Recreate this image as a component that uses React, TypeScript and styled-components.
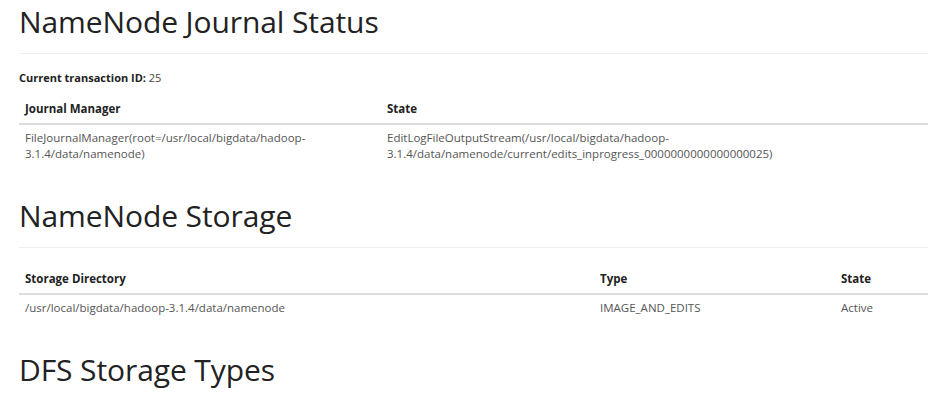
import React from "react";
import styled, { createGlobalStyle } from "styled-components";

const GlobalStyle = createGlobalStyle`
  html, body {
    margin: 0;
    padding: 0;
    background: #fff;
  }
  body {
    font-family: "Open Sans", "Noto Sans", sans-serif;
    font-size: 11px;
    color: #333;
  }
`;

const Page = styled.div`
  width: 909px;
  padding: 4px 15px 0 19px;
`;

const PageHeader = styled.div`
  border-bottom: 1px solid #eee;
  padding-bottom: 13px;
  margin-bottom: 16px;
`;

const Title = styled.h1`
  margin: 0;
  font-size: 30px;
  font-weight: 400;
  line-height: 36px;
  color: #222;
  letter-spacing: -0.1px;
`;

const InfoLine = styled.p`
  margin: 0 0 8px;
  line-height: 16px;
  color: #444;
  b {
    font-weight: 700;
    color: #222;
  }
`;

const Table = styled.table`
  width: 100%;
  border-collapse: collapse;
  margin-bottom: 31px;
  font-size: 11.5px;
`;

const Th = styled.th`
  text-align: left;
  font-weight: 700;
  color: #222;
  padding: 7px 6px 6px;
  line-height: 16px;
  border-bottom: 2px solid #ddd;
`;

const Td = styled.td`
  vertical-align: top;
  padding: 5px 6px;
  line-height: 16px;
  color: #555;
`;

export default function App() {
  return (
    <Page>
      <GlobalStyle />
      <section>
        <PageHeader>
          <Title>NameNode Journal Status</Title>
        </PageHeader>
        <InfoLine>
          <b>Current transaction ID:</b> 25
        </InfoLine>
        <Table>
          <colgroup>
            <col style={{ width: "362px" }} />
            <col />
          </colgroup>
          <thead>
            <tr>
              <Th>Journal Manager</Th>
              <Th>State</Th>
            </tr>
          </thead>
          <tbody>
            <tr>
              <Td>
                FileJournalManager(root=/usr/local/bigdata/hadoop-
                <br />
                3.1.4/data/namenode)
              </Td>
              <Td>
                EditLogFileOutputStream(/usr/local/bigdata/hadoop-
                <br />
                3.1.4/data/namenode/current/edits_inprogress_0000000000000000025)
              </Td>
            </tr>
          </tbody>
        </Table>
      </section>
      <section>
        <PageHeader>
          <Title>NameNode Storage</Title>
        </PageHeader>
        <Table>
          <colgroup>
            <col style={{ width: "575px" }} />
            <col style={{ width: "241px" }} />
            <col />
          </colgroup>
          <thead>
            <tr>
              <Th>Storage Directory</Th>
              <Th>Type</Th>
              <Th>State</Th>
            </tr>
          </thead>
          <tbody>
            <tr>
              <Td>/usr/local/bigdata/hadoop-3.1.4/data/namenode</Td>
              <Td>IMAGE_AND_EDITS</Td>
              <Td>Active</Td>
            </tr>
          </tbody>
        </Table>
      </section>
      <section>
        <PageHeader>
          <Title>DFS Storage Types</Title>
        </PageHeader>
      </section>
    </Page>
  );
}
